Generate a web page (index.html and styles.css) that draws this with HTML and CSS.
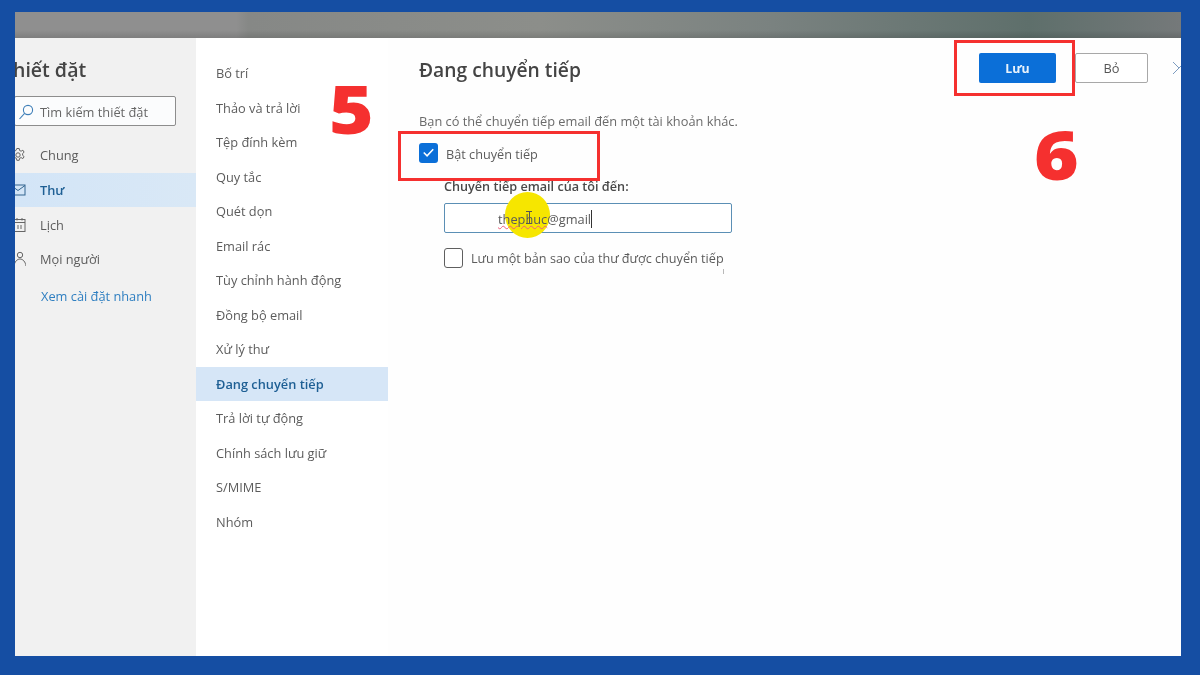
FILE: index.html
```html
<!DOCTYPE html>
<html lang="vi">
<head>
<meta charset="utf-8">
<title>Thiết đặt</title>
<link rel="stylesheet" href="styles.css">
</head>
<body>
<div class="frame">
  <div class="topband"></div>
  <div class="panes">
    <aside class="side">
      <h1 class="side-title">Thiết đặt</h1>
      <div class="search">
        <svg class="search-icon" viewBox="0 0 16 16" width="16" height="16"><circle cx="10" cy="6" r="4.6" fill="none" stroke="#3f7fb8" stroke-width="1.1"/><path d="M6.600 9.400 1.500 15" fill="none" stroke="#3f7fb8" stroke-width="1.1"/></svg>
        <span>Tìm kiếm thiết đặt</span>
      </div>
      <nav class="side-nav">
        <div class="side-item">
          <svg class="side-icon" viewBox="0 0 16 16" width="16" height="16"><circle cx="8" cy="8" r="2.2" fill="none" stroke="#666" stroke-width="1"/><path d="M6.800 1.500h2.400l.4 2 1.500.7 1.800-1 1.200 2-1.500 1.300v1.800l1.500 1.300-1.200 2-1.800-1-1.500.7-.4 2H6.800l-.4-2-1.500-.7-1.800 1-1.200-2 1.500-1.300V7L1.400 5.200l1.200-2 1.800 1 1.500-.7z" fill="none" stroke="#666" stroke-width="1"/></svg>
          <span>Chung</span>
        </div>
        <div class="side-item is-active">
          <svg class="side-icon" viewBox="0 0 16 16" width="16" height="16"><rect x="1" y="3" width="14" height="10" fill="none" stroke="#33658f" stroke-width="1"/><path d="m1 3.500 7 5 7-5" fill="none" stroke="#33658f" stroke-width="1"/></svg>
          <span>Thư</span>
        </div>
        <div class="side-item">
          <svg class="side-icon" viewBox="0 0 16 16" width="16" height="16"><rect x="4" y="2.500" width="11" height="12" fill="none" stroke="#666" stroke-width="1"/><path d="M4 5.500h11M7 1v2.500M12 1v2.500M8 8v4M11 8v4" fill="none" stroke="#666" stroke-width="1"/></svg>
          <span>Lịch</span>
        </div>
        <div class="side-item">
          <svg class="side-icon" viewBox="0 0 16 16" width="16" height="16"><circle cx="10" cy="4" r="2.700" fill="none" stroke="#666" stroke-width="1"/><path d="M4 15c.5-4 3-7 6-7s5.500 3 6 7" fill="none" stroke="#666" stroke-width="1"/></svg>
          <span>Mọi người</span>
        </div>
      </nav>
      <a class="quick-link">Xem cài đặt nhanh</a>
    </aside>
    <nav class="middle">
      <div class="middle-item">Bố trí</div>
      <div class="middle-item">Thảo và trả lời</div>
      <div class="middle-item">Tệp đính kèm</div>
      <div class="middle-item">Quy tắc</div>
      <div class="middle-item">Quét dọn</div>
      <div class="middle-item">Email rác</div>
      <div class="middle-item">Tùy chỉnh hành động</div>
      <div class="middle-item">Đồng bộ email</div>
      <div class="middle-item">Xử lý thư</div>
      <div class="middle-item is-active">Đang chuyển tiếp</div>
      <div class="middle-item">Trả lời tự động</div>
      <div class="middle-item">Chính sách lưu giữ</div>
      <div class="middle-item">S/MIME</div>
      <div class="middle-item">Nhóm</div>
    </nav>
    <main class="content">
      <header class="content-head">
        <h2 class="content-title">Đang chuyển tiếp</h2>
        <div class="actions">
          <button class="btn btn-primary">Lưu</button>
          <button class="btn btn-ghost">Bỏ</button>
          <svg class="close" viewBox="0 0 12 12" width="12" height="12"><path d="M1 0 7 6 1 12M13 0 7 6" fill="none" stroke="#7d9cc0" stroke-width="1"/></svg>
        </div>
      </header>
      <p class="desc">Bạn có thể chuyển tiếp email đến một tài khoản khác.</p>
      <label class="check-row toggle-row">
        <span class="check is-on"><svg viewBox="0 0 20 20" width="19" height="19"><path d="m5 10 3.500 3.500L15 6.500" fill="none" stroke="#fff" stroke-width="1.600"/></svg></span>
        <span class="toggle-text">Bật chuyển tiếp</span>
      </label>
      <div class="forward-block">
        <div class="field-label">Chuyển tiếp email của tôi đến:</div>
        <div class="input">
          <div class="highlight"></div>
          <span class="typed"><span class="misspelt">thephuc</span>@gmail</span><span class="caret"></span>
          <div class="ibeam"></div>
        </div>
        <label class="check-row copy-row">
          <span class="check"></span>
          <span>Lưu một bản sao của thư được chuyển tiếp</span>
        </label>
        <div class="tick"></div>
      </div>
    </main>
  </div>
</div>
<div class="callout callout-a"></div>
<div class="callout callout-b"></div>
<div class="step step-5">5</div>
<div class="step step-6">6</div>
</body>
</html>
```
FILE: styles.css
```css
* { box-sizing: border-box; }
html, body { margin: 0; height: 100%; }
body {
  width: 1200px;
  height: 675px;
  overflow: hidden;
  background: #154ea3;
  padding: 12px 19px 19px 15px;
  font-family: "Open Sans", "Noto Sans", "Liberation Sans", sans-serif;
  font-size: 12.8px;
  color: #5c5c5c;
}
.frame {
  width: 1166px;
  height: 644px;
  display: flex;
  flex-direction: column;
  overflow: hidden;
  filter: blur(0.5px);
}
.topband {
  height: 26px;
  flex: none;
  background:
    linear-gradient(180deg, rgba(0,0,0,0) 70%, rgba(0,0,0,.12)),
    linear-gradient(90deg, #8f8f8f 0, #8f8f8f 19%, #868886 20%, #8c8e8a 45%, #7a8280 65%, #5e6f6b 87%, #75797a 100%);
}
.panes { flex: 1; display: flex; min-height: 0; }

.side {
  width: 181px;
  flex: none;
  background: #f1f1f1;
  padding-top: 18px;
}
.side-title {
  margin: 0 0 13px -13px;
  font-size: 19.5px;
  line-height: 27px;
  font-weight: 600;
  color: #444;
  white-space: nowrap;
}
.search {
  width: 162px;
  height: 30px;
  margin-left: -1px;
  border: 1px solid #8d8d8d;
  border-radius: 2px;
  background: #fbfcfd;
  display: flex;
  align-items: center;
  gap: 6px;
  padding-left: 3px;
  padding-top: 1px;
  color: #666;
}
.search-icon { flex: none; }
.side-nav { margin-top: 12px; }
.side-item {
  height: 34.7px;
  display: flex;
  align-items: center;
  gap: 14px;
}
.side-icon { flex: none; margin-left: -5px; }
.side-item.is-active {
  background: linear-gradient(90deg, #d3e5f7, #d9e8f6);
  color: #1e5f94;
  font-weight: 600;
}
.quick-link {
  display: block;
  margin: 9.500px 0 0 26px;
  color: #2f7fc1;
  line-height: 20px;
}

.middle {
  width: 192px;
  flex: none;
  background: #fff;
  padding-top: 18px;
}
.middle-item {
  height: 34.5px;
  line-height: 34.5px;
  padding-left: 20px;
}
.middle-item.is-active {
  background: #d6e6f7;
  color: #1e5f94;
  font-weight: 600;
}

.content {
  flex: 1;
  min-width: 0;
  background: #fefefe;
  padding-left: 31px;
}
.content-head {
  display: flex;
  justify-content: space-between;
  height: 45px;
  padding-top: 15px;
}
.content-title {
  margin: 4px 0 0;
  font-size: 19.25px;
  line-height: 26px;
  font-weight: 600;
  color: #444;
}
.actions { display: flex; align-items: center; height: 30px; margin-right: 1px; }
.btn {
  height: 30px;
  font: inherit;
  border-radius: 2px;
}
.btn-primary {
  width: 77px;
  background: #0b6fd8;
  border: 0;
  color: #e8f2fb;
  font-size: 12.3px;
  font-weight: 700;
}
.btn-ghost {
  width: 73px;
  margin-left: 19px;
  background: #fff;
  border: 1px solid #a8a8a8;
  color: #555;
}
.close { margin-left: 24px; margin-right: -4px; flex: none; }
.desc {
  margin: 0;
  padding-top: 28px;
  line-height: 20px;
  color: #6a6a6a;
}
.check-row { display: flex; align-items: center; gap: 8px; height: 20px; }
.toggle-row { margin-top: 12px; }
.toggle-text { font-size: 12.7px; margin-top: 1px; }
.check {
  width: 19px;
  height: 20px;
  flex: none;
  border: 1px solid #5f5f5f;
  border-radius: 3px;
  background: #fff;
  display: block;
}
.check.is-on {
  background: #0b6fd8;
  border: 0;
}
.check svg { display: block; }
.forward-block { margin-left: 25px; position: relative; }
.field-label {
  margin-top: 13px;
  font-size: 12.65px;
  line-height: 20px;
  font-weight: 600;
  color: #4a4a4a;
}
.input {
  position: relative;
  width: 288px;
  height: 30px;
  margin-top: 7px;
  border: 1px solid #5b8fb5;
  border-radius: 2px;
  background: #fff;
  display: flex;
  align-items: center;
  padding-left: 53px;
  padding-top: 2px;
  color: #5a5a5a;
}
.typed, .caret { position: relative; }
.misspelt {
  text-decoration: underline wavy #ec5f7c 1px;
  text-underline-offset: 1px;
}
.caret { width: 1px; height: 18px; margin-left: 0; background: #333; }
.copy-row { margin-top: 15px; font-size: 12.65px; }
.tick {
  position: absolute;
  left: 279px;
  top: 93px;
  width: 1px;
  height: 5px;
  background: #b9b9b9;
}

.highlight {
  position: absolute;
  left: 60px;
  top: -12px;
  width: 45px;
  height: 46px;
  border-radius: 50%;
  background: #f6e600;
}
.ibeam {
  position: absolute;
  left: 81px;
  top: 7px;
  width: 6px;
  height: 13px;
  border-top: 1px solid #555;
  border-bottom: 1px solid #555;
  background: linear-gradient(#555, #555) center / 1px 100% no-repeat;
}
.callout {
  position: absolute;
  border: 3px solid #f5302f;
}
.callout-a { left: 398px; top: 131px; width: 202px; height: 50px; }
.callout-b { left: 954px; top: 40px; width: 121px; height: 56px; }
.step {
  position: absolute;
  font-family: "Open Sans", "Noto Sans", sans-serif;
  font-weight: 800;
  color: #f5302f;
  font-size: 67px;
  line-height: 67px;
  transform: scaleX(1.14);
  transform-origin: left center;
}
.step-5 { left: 329px; top: 74.5px; }
.step-6 { left: 1034px; top: 121px; }
```
